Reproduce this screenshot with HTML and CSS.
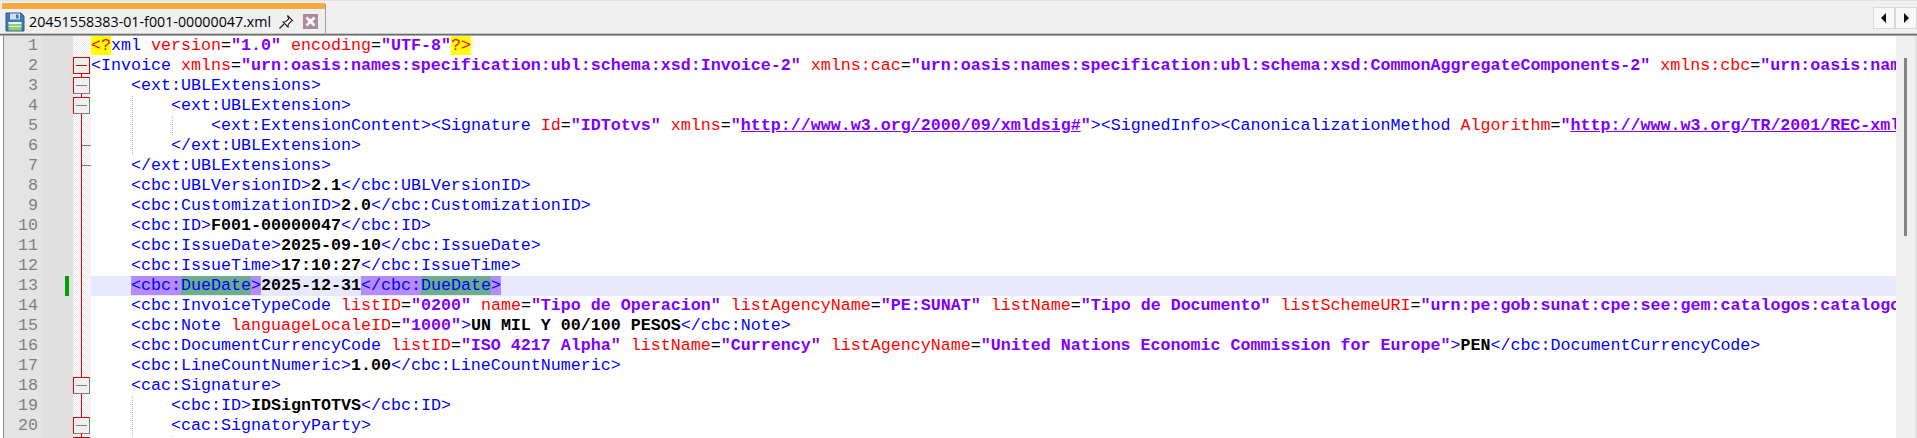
FILE: index.html
```html
<!DOCTYPE html>
<html lang="en">
<head>
<meta charset="utf-8">
<title>20451558383-01-f001-00000047.xml</title>
<link rel="stylesheet" href="styles.css">
</head>
<body>
<div class="app">
  <header class="tabbar">
    <div class="tab">
      <div class="tab-accent"></div>
      <div class="tab-body">
        <svg class="save" width="20" height="20" viewBox="0 0 20 20"><path d="M1 1h15l3 3v15H1z" fill="#3f76b8" stroke="#2b5a94"/><rect x="5" y="1.5" width="10" height="6" fill="#cfe0f2"/><rect x="11" y="2.5" width="2.5" height="4" fill="#3f76b8"/><rect x="3.5" y="10" width="13" height="8.5" fill="#8fce72"/><rect x="3.5" y="10" width="13" height="2" fill="#f2f7ee"/><rect x="3.5" y="14" width="13" height="1" fill="#d8efcc"/></svg>
        <span class="tab-title">20451558383-01-f001-00000047.xml</span>
        <svg class="pin" width="16" height="16" viewBox="0 0 16 16"><path d="M9.5 1.5l5 5-1.5.8-2.7 3.2-.3 2.5-5-5 2.5-.3 3.2-2.7z" fill="#fff" stroke="#222" stroke-width="1.1"/><path d="M6 10l-4.500 4.500" stroke="#222" stroke-width="1.200"/></svg>
        <svg class="close" width="15" height="15" viewBox="0 0 15 15"><rect width="15" height="15" fill="#b08a9a"/><path d="M3.500 3.500l8 8M11.500 3.500l-8 8" stroke="#fff" stroke-width="2.600"/></svg>
      </div>
    </div>
    <div class="tabnav">
      <button class="navbtn"><svg width="6" height="10" viewBox="0 0 6 10"><path d="M5 0v10L0 5z" fill="#111"/></svg></button>
      <button class="navbtn"><svg width="6" height="10" viewBox="0 0 6 10"><path d="M1 0v10l5-5z" fill="#111"/></svg></button>
    </div>
  </header>
  <main class="editor">
    <div class="lines">
      <div class="row"><span class="num">1</span><span class="mark"></span><span class="fold"></span><code class="code"><i class="pi">&lt;?</i><b class="t">xml</b> <b class="a">version</b><b class="e">=</b><b class="v">"1.0"</b> <b class="a">encoding</b><b class="e">=</b><b class="v">"UTF-8"</b><i class="pi">?&gt;</i></code></div>
      <div class="row"><span class="num">2</span><span class="mark"></span><span class="fold fold-top"><span class="box box-head"></span></span><code class="code"><b class="t">&lt;Invoice</b> <b class="a">xmlns</b><b class="e">=</b><b class="v">"urn:oasis:names:specification:ubl:schema:xsd:Invoice-2"</b> <b class="a">xmlns:cac</b><b class="e">=</b><b class="v">"urn:oasis:names:specification:ubl:schema:xsd:CommonAggregateComponents-2"</b> <b class="a">xmlns:cbc</b><b class="e">=</b><b class="v">"urn:oasis:names:specification:ubl:schema:xsd:CommonBasicComponents-2"</b></code></div>
      <div class="row"><span class="num">3</span><span class="mark"></span><span class="fold fold-line"><span class="box"></span></span><code class="code ind1"><b class="t">&lt;ext:UBLExtensions&gt;</b></code></div>
      <div class="row"><span class="num">4</span><span class="mark"></span><span class="fold fold-line"><span class="box"></span></span><code class="code ind2 g1"><b class="t">&lt;ext:UBLExtension&gt;</b></code></div>
      <div class="row"><span class="num">5</span><span class="mark"></span><span class="fold fold-line"></span><code class="code ind3 g1 g2"><b class="t">&lt;ext:ExtensionContent&gt;&lt;Signature</b> <b class="a">Id</b><b class="e">=</b><b class="v">"IDTotvs"</b> <b class="a">xmlns</b><b class="e">=</b><b class="v">"<u>http://www.w3.org/2000/09/xmldsig#</u>"</b><b class="t">&gt;&lt;SignedInfo&gt;&lt;CanonicalizationMethod</b> <b class="a">Algorithm</b><b class="e">=</b><b class="v">"<u>http://www.w3.org/TR/2001/REC-xml-c14n-20010315</u>"</b></code></div>
      <div class="row"><span class="num">6</span><span class="mark"></span><span class="fold fold-line tick"></span><code class="code ind2 g1"><b class="t">&lt;/ext:UBLExtension&gt;</b></code></div>
      <div class="row"><span class="num">7</span><span class="mark"></span><span class="fold fold-line tick"></span><code class="code ind1"><b class="t">&lt;/ext:UBLExtensions&gt;</b></code></div>
      <div class="row"><span class="num">8</span><span class="mark"></span><span class="fold fold-line"></span><code class="code ind1"><b class="t">&lt;cbc:UBLVersionID&gt;</b><b class="x">2.1</b><b class="t">&lt;/cbc:UBLVersionID&gt;</b></code></div>
      <div class="row"><span class="num">9</span><span class="mark"></span><span class="fold fold-line"></span><code class="code ind1"><b class="t">&lt;cbc:CustomizationID&gt;</b><b class="x">2.0</b><b class="t">&lt;/cbc:CustomizationID&gt;</b></code></div>
      <div class="row"><span class="num">10</span><span class="mark"></span><span class="fold fold-line"></span><code class="code ind1"><b class="t">&lt;cbc:ID&gt;</b><b class="x">F001-00000047</b><b class="t">&lt;/cbc:ID&gt;</b></code></div>
      <div class="row"><span class="num">11</span><span class="mark"></span><span class="fold fold-line"></span><code class="code ind1"><b class="t">&lt;cbc:IssueDate&gt;</b><b class="x">2025-09-10</b><b class="t">&lt;/cbc:IssueDate&gt;</b></code></div>
      <div class="row"><span class="num">12</span><span class="mark"></span><span class="fold fold-line"></span><code class="code ind1"><b class="t">&lt;cbc:IssueTime&gt;</b><b class="x">17:10:27</b><b class="t">&lt;/cbc:IssueTime&gt;</b></code></div>
      <div class="row current"><span class="num">13</span><span class="mark mark-on"></span><span class="fold fold-line"></span><code class="code ind1"><b class="t hl">&lt;cbc:</b><b class="t hl2">DueDate</b><b class="t hl">&gt;</b><b class="x">2025-12-31</b><b class="t hl">&lt;/cbc:</b><b class="t hl2">DueDate</b><b class="t hl">&gt;</b></code></div>
      <div class="row"><span class="num">14</span><span class="mark"></span><span class="fold fold-line"></span><code class="code ind1"><b class="t">&lt;cbc:InvoiceTypeCode</b> <b class="a">listID</b><b class="e">=</b><b class="v">"0200"</b> <b class="a">name</b><b class="e">=</b><b class="v">"Tipo de Operacion"</b> <b class="a">listAgencyName</b><b class="e">=</b><b class="v">"PE:SUNAT"</b> <b class="a">listName</b><b class="e">=</b><b class="v">"Tipo de Documento"</b> <b class="a">listSchemeURI</b><b class="e">=</b><b class="v">"urn:pe:gob:sunat:cpe:see:gem:catalogos:catalogo51"</b></code></div>
      <div class="row"><span class="num">15</span><span class="mark"></span><span class="fold fold-line"></span><code class="code ind1"><b class="t">&lt;cbc:Note</b> <b class="a">languageLocaleID</b><b class="e">=</b><b class="v">"1000"</b><b class="t">&gt;</b><b class="x">UN MIL Y 00/100 PESOS</b><b class="t">&lt;/cbc:Note&gt;</b></code></div>
      <div class="row"><span class="num">16</span><span class="mark"></span><span class="fold fold-line"></span><code class="code ind1"><b class="t">&lt;cbc:DocumentCurrencyCode</b> <b class="a">listID</b><b class="e">=</b><b class="v">"ISO 4217 Alpha"</b> <b class="a">listName</b><b class="e">=</b><b class="v">"Currency"</b> <b class="a">listAgencyName</b><b class="e">=</b><b class="v">"United Nations Economic Commission for Europe"</b><b class="t">&gt;</b><b class="x">PEN</b><b class="t">&lt;/cbc:DocumentCurrencyCode&gt;</b></code></div>
      <div class="row"><span class="num">17</span><span class="mark"></span><span class="fold fold-line"></span><code class="code ind1"><b class="t">&lt;cbc:LineCountNumeric&gt;</b><b class="x">1.00</b><b class="t">&lt;/cbc:LineCountNumeric&gt;</b></code></div>
      <div class="row"><span class="num">18</span><span class="mark"></span><span class="fold fold-line"><span class="box"></span></span><code class="code ind1"><b class="t">&lt;cac:Signature&gt;</b></code></div>
      <div class="row"><span class="num">19</span><span class="mark"></span><span class="fold fold-line"></span><code class="code ind2 g1"><b class="t">&lt;cbc:ID&gt;</b><b class="x">IDSignTOTVS</b><b class="t">&lt;/cbc:ID&gt;</b></code></div>
      <div class="row"><span class="num">20</span><span class="mark"></span><span class="fold fold-line"><span class="box"></span></span><code class="code ind2 g1"><b class="t">&lt;cac:SignatoryParty&gt;</b></code></div>
      <div class="row"><span class="num">21</span><span class="mark"></span><span class="fold fold-line"><span class="box"></span></span><code class="code ind3 g1 g2"><b class="t">&lt;cac:PartyIdentification&gt;</b></code></div>
    </div>
    <aside class="scrollbar"><div class="thumb"></div></aside>
  </main>
</div>
</body>
</html>
```
FILE: styles.css
```css
html, body {
  margin: 0;
  height: 100%;
  overflow: hidden;
  background: #f0f0f0;
}
.app {
  display: flex;
  flex-direction: column;
  height: 438px;
  overflow: hidden;
}
.tabbar {
  display: flex;
  justify-content: space-between;
  height: 33px;
  padding-top: 3px;
  padding-left: 2px;
  box-sizing: border-box;
  background: #f0f0f0;
  border-top: 1px solid #e2e2e2;
  flex: none;
}
.tab {
  width: 323px;
  border-right: 1px solid #a0a0a0;
  display: flex;
  flex-direction: column;
}
.tab-accent { height: 6px; background: #faa93c; margin-top: -1px; }
.tab-body {
  flex: 1;
  display: flex;
  align-items: center;
  padding-left: 3px;
  background: #f0f0f0;
  padding-top: 1px;
}
.save { flex: none; }
.tab-title {
  font: 14.25px/20px "Open Sans", "Liberation Sans", sans-serif;
  color: #000;
  margin-left: 4px;
  white-space: nowrap;
  width: 243px;
}
.pin { margin-left: 6px; flex: none; }
.close { margin-left: 9px; flex: none; }
.tabnav {
  display: flex;
  margin-top: 3px;
  margin-bottom: 4px;
}
.navbtn {
  width: 22px;
  height: 22px;
  padding: 0;
  border: 1px solid #d8d8d8;
  background: #f8f8f8;
  display: flex;
  align-items: center;
  justify-content: center;
}
.editor {
  flex: 1;
  display: flex;
  min-height: 0;
  border-top: 1px solid #c8c8c8;
  box-shadow: inset 0 1px 0 #6e6e6e, inset 0 2px 0 #a8a8a8;
  padding-top: 2px;
  padding-left: 3px;
  background: #fff;
}
.lines {
  flex: 1;
  min-width: 0;
  overflow: hidden;
  border-left: 1px solid #8a8a8a;
  background: #fff;
}
.row {
  display: flex;
  height: 20px;
}
.num {
  flex: none;
  width: 34px;
  padding-right: 4px;
  background: #e4e4e4;
  color: #808080;
  font: 16.67px/20px "Liberation Mono", monospace;
  text-align: right;
}
.mark {
  flex: none;
  width: 31px;
  background: #e0e0e0;
  position: relative;
}
.mark-on::after {
  content: "";
  position: absolute;
  left: 23px;
  top: 0;
  bottom: 0;
  width: 4px;
  background: #00a000;
}
.fold {
  flex: none;
  width: 18px;
  position: relative;
  background: repeating-conic-gradient(#e8e8e8 0 25%, #fff 0 50%) 0 0 / 2px 2px;
}
.fold-line::before, .fold-top::before {
  content: "";
  position: absolute;
  left: 8px;
  top: 0;
  bottom: 0;
  width: 1px;
  background: #e00000;
}
.fold-top::before { top: 10px; }
.tick::after {
  content: "";
  position: absolute;
  left: 9px;
  top: 9px;
  width: 9px;
  height: 1px;
  background: #808080;
}
.box {
  position: absolute;
  left: 0;
  top: 1px;
  width: 17px;
  height: 17px;
  box-sizing: border-box;
  background: #f0f0f0;
  border: 1px solid;
  border-color: #e00000 #808080 #808080 #e00000;
  z-index: 1;
}
.box::after {
  content: "";
  position: absolute;
  left: 2px;
  right: 2px;
  top: 7px;
  height: 1px;
  background: #808080;
}
.box-head { border-color: #e00000; }
.box-head::after { background: #e00000; }
.code {
  flex: 1;
  min-width: 0;
  display: block;
  overflow: hidden;
  white-space: pre;
  position: relative;
  font: 16.67px/20px "Liberation Mono", monospace;
  color: #000;
  background: #fff;
}
.code b { font-weight: 400; }
.ind1 { padding-left: 40px; }
.ind2 { padding-left: 80px; }
.ind3 { padding-left: 120px; }
.g1::before, .g2::after {
  content: "";
  position: absolute;
  top: 0;
  bottom: 0;
  width: 1px;
  background: repeating-linear-gradient(#b8b8b8 0 1px, transparent 1px 2px);
}
.g1::before { left: 41px; }
.g2::after { left: 81px; }
.current .code { background: #e8e8ff; }
.pi { font-style: normal; background: #ffff00; color: #ff0000; }
.code .t { color: #0000ff; }
.code .a { color: #ff0000; }
.code .e { color: #000; }
.code .v { color: #8000ff; font-weight: 700; }
.code .x { color: #000; font-weight: 700; }
.code .hl { background: #b48cff; }
.code .hl2 { background: #6aae8a; }
.scrollbar {
  flex: none;
  width: 21px;
  background: #efefef;
  border-right: 2px solid #e2e2e2;
  box-sizing: border-box;
  position: relative;
}
.thumb {
  position: absolute;
  left: 8px;
  top: 22px;
  width: 3px;
  height: 178px;
  background: #848484;
}
```
